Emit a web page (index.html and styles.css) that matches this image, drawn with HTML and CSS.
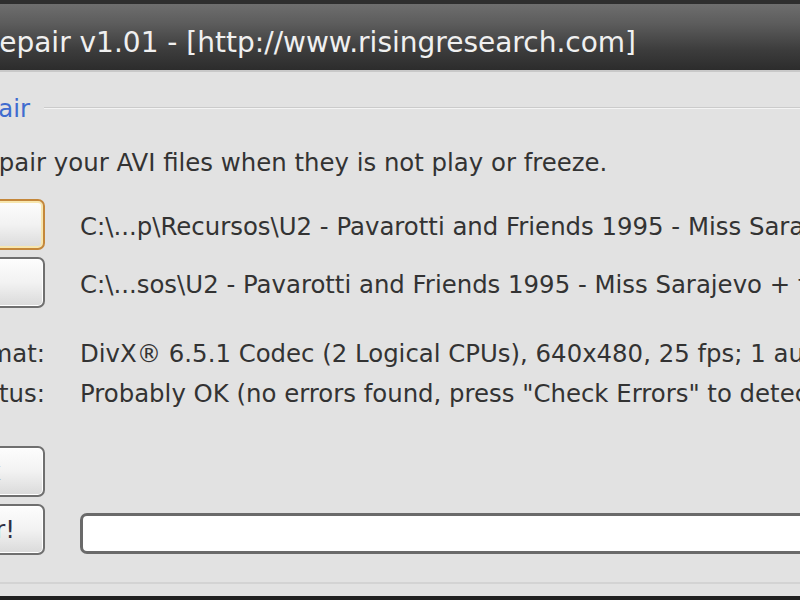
FILE: index.html
```html
<!DOCTYPE html>
<html>
<head>
<meta charset="utf-8">
<link rel="stylesheet" href="styles.css">
</head>
<body>
<div class="window">
  <div class="titlebar"><span class="title">Repair v1.01 - [http://www.risingresearch.com]</span></div>
  <div class="client">
    <div class="group-head"><span class="group-label">Repair</span><span class="group-line"></span></div>
    <div class="desc">Repair your AVI files when they is not play or freeze.</div>
    <div class="files">
      <div class="row">
        <button class="btn file-btn hot">Open</button>
        <span class="path">C:\...p\Recursos\U2 - Pavarotti and Friends 1995 - Miss Sarajevo.avi</span>
      </div>
      <div class="row">
        <button class="btn file-btn">Save</button>
        <span class="path">C:\...sos\U2 - Pavarotti and Friends 1995 - Miss Sarajevo + fixed.avi</span>
      </div>
    </div>
    <div class="info">
      <div class="info-row"><span class="label">Format:</span><span class="value">DivX® 6.5.1 Codec (2 Logical CPUs), 640x480, 25 fps; 1 audio stream</span></div>
      <div class="info-row"><span class="label">Status:</span><span class="value">Probably OK (no errors found, press "Check Errors" to detect)</span></div>
    </div>
    <div class="actions">
      <div class="row"><button class="btn check-btn">Check</button></div>
      <div class="row"><button class="btn">Repair!</button><div class="progress"></div></div>
    </div>
  </div>
  <div class="bottom"></div>
</div>
</body>
</html>
```
FILE: styles.css
```css
html, body {
  margin: 0;
  padding: 0;
  width: 800px;
  height: 600px;
  overflow: hidden;
  background: #e2e2e2;
}
.window {
  display: flex;
  flex-direction: column;
  height: 600px;
  font-family: Tahoma, "DejaVu Sans", sans-serif;
  color: #333;
}
.titlebar {
  height: 66px;
  border-top: 4px solid #2e2e2e;
  border-bottom: 2px solid #c8c8c8;
  background: linear-gradient(#6e6e6e 0%, #5c5c5c 30%, #3c3c3c 70%, #2c2c2c 100%);
  display: flex;
  align-items: center;
  flex-shrink: 0;
}
.title {
  margin-left: -19px;
  margin-top: 10px;
  font-family: "DejaVu Sans", sans-serif;
  font-size: 28px;
  color: #f0f0f0;
  white-space: nowrap;
}
.client {
  flex: 1;
  display: flex;
  flex-direction: column;
  margin-left: -100px;
  border-bottom: 2px solid #d3d3d3;
  font-size: 24.4px;
}
.group-head {
  display: flex;
  align-items: center;
  margin-top: 22px;
  height: 28px;
}
.group-label {
  color: #3f6ccf;
  margin-left: 52px;
  white-space: nowrap;
}
.group-line {
  flex: 1;
  height: 1px;
  background: #cbcbcb;
  margin-left: 14px;
  border-bottom: 1px solid #f4f4f4;
}
.desc {
  margin-top: 27px;
  margin-left: 68px;
  white-space: nowrap;
  height: 28px;
  line-height: 28px;
}
.files {
  margin-top: 22px;
  display: flex;
  flex-direction: column;
  gap: 8px;
}
.row {
  display: flex;
  align-items: center;
  gap: 35px;
  height: 50px;
  white-space: nowrap;
}
.path {
  padding-top: 5px;
}
.btn {
  width: 145px;
  height: 51px;
  flex-shrink: 0;
  border: 2px solid #6f6f6f;
  border-radius: 7px;
  background: linear-gradient(#fdfdfd 0%, #f2f2f2 50%, #dadada 100%);
  font-family: Tahoma, "DejaVu Sans", sans-serif;
  font-size: 24.4px;
  color: #2e2e44;
  text-align: right;
  padding: 0 28px 0 0;
  box-shadow: inset 0 0 0 1px #fff;
}
.file-btn { padding-right: 60px; }
.check-btn { padding-right: 42px; color: #9a9a9a; }
.btn.hot {
  border-color: #c4873a;
  box-shadow: inset 0 0 0 2px #f7e6ae;
}
.info {
  margin-top: 33px;
  display: flex;
  flex-direction: column;
  gap: 12px;
}
.info-row {
  display: flex;
  height: 28px;
  line-height: 28px;
  white-space: nowrap;
}
.label {
  width: 145px;
  flex-shrink: 0;
  text-align: right;
  margin-right: 35px;
}
.actions {
  margin-top: 38px;
  display: flex;
  flex-direction: column;
  gap: 8px;
}
.progress {
  flex: 1;
  height: 35px;
  border: 3px solid #6a6a6a;
  border-radius: 7px;
  background: #fff;
  margin-right: -40px;
  margin-top: 8px;
}
.bottom {
  height: 4px;
  margin-top: 12px;
  background: #202020;
  flex-shrink: 0;
}
```
